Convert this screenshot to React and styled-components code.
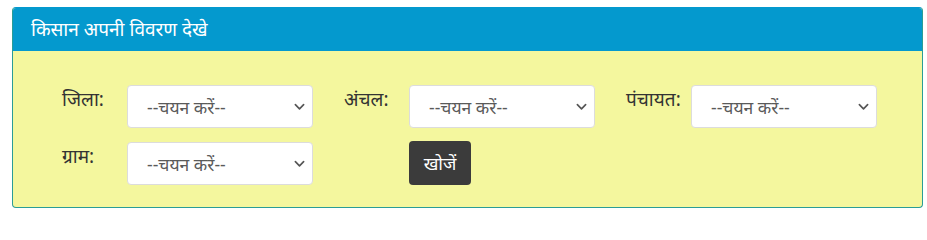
import styled, { createGlobalStyle } from "styled-components";

const GlobalStyle = createGlobalStyle`
  body {
    margin: 0;
    background: #ffffff;
    font-family: "Noto Sans", "Noto Sans Devanagari", "Lohit Devanagari", sans-serif;
  }
`;

const fields = [
  { label: "जिला:" },
  { label: "अंचल:" },
  { label: "पंचायत:" },
  { label: "ग्राम:" },
];

function Chevron() {
  return (
    <Arrow viewBox="0 0 12 8" aria-hidden="true">
      <path d="M1.5 1.5 L6 6 L10.5 1.5" fill="none" stroke="#555" strokeWidth="1.8" strokeLinecap="round" strokeLinejoin="round" />
    </Arrow>
  );
}

function App() {
  return (
    <>
      <GlobalStyle />
      <Page>
        <Panel>
          <Header>किसान अपनी विवरण देखे</Header>
          <Body>
            <Form>
              {fields.map((f) => (
                <Field key={f.label}>
                  <Label>{f.label}</Label>
                  <SelectWrap>
                    <Select defaultValue="">
                      <option value="">--चयन करें--</option>
                    </Select>
                    <Chevron />
                  </SelectWrap>
                </Field>
              ))}
              <Field>
                <Label />
                <div>
                  <Button>खोजें</Button>
                </div>
              </Field>
            </Form>
          </Body>
        </Panel>
      </Page>
    </>
  );
}

const Page = styled.div`
  padding: 7px 4px 6px 12px;
`;

const Panel = styled.section`
  width: 911px;
  border: 1px solid #2a9d96;
  border-top-color: #0499ce;
  border-radius: 4px;
  overflow: hidden;
  background: #f4f79e;
  box-sizing: border-box;
`;

const Header = styled.div`
  height: 44px;
  background: #0499ce;
  color: #ffffff;
  font-size: 19px;
  line-height: 44px;
  padding: 0 19px;
  margin: -1px -1px 0;
`;

const Body = styled.div`
  padding: 34px 20px 22px 49px;
`;

const Form = styled.div`
  display: grid;
  grid-template-columns: repeat(3, auto);
  justify-content: start;
  column-gap: 31.5px;
  row-gap: 14px;
`;

const Field = styled.div`
  display: grid;
  grid-template-columns: 65px 185.5px;
  align-items: start;
`;

const Label = styled.label`
  color: #333333;
  font-size: 19px;
  line-height: 26px;
  padding-top: 1px;
`;

const SelectWrap = styled.div`
  position: relative;
  width: 185.5px;
`;

const Select = styled.select`
  appearance: none;
  width: 100%;
  height: 43px;
  background: #ffffff;
  border: 1px solid #dcdcdc;
  border-radius: 4px;
  padding: 0 30px 0 19px;
  font-family: inherit;
  font-size: 17.5px;
  color: #5a5a5a;
  outline: none;
`;

const Arrow = styled.svg`
  position: absolute;
  right: 8px;
  top: 18px;
  width: 11px;
  height: 8px;
  pointer-events: none;
`;

const Button = styled.button`
  background: #3b3b3b;
  color: #ffffff;
  border: none;
  border-radius: 4px;
  width: 62px;
  height: 44px;
  margin-top: -1px;
  font-family: inherit;
  font-size: 18px;
  cursor: pointer;
`;

export default App;
